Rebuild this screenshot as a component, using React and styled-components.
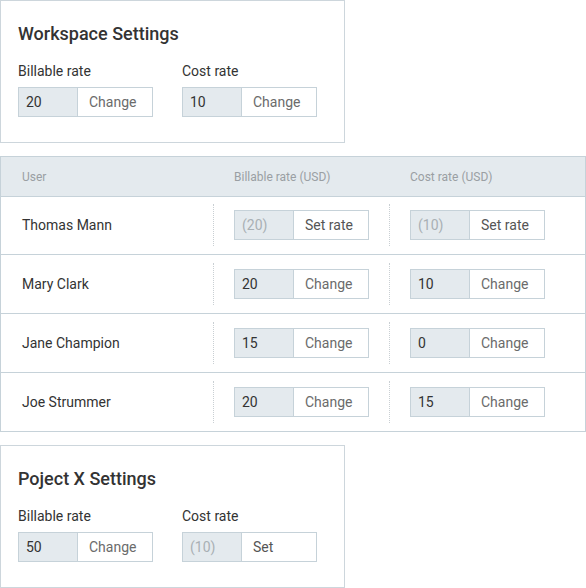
import React from "react";
import styled, { createGlobalStyle } from "styled-components";

const Global = createGlobalStyle`
  html, body { margin: 0; padding: 0; background: #ffffff; }
  body { font-family: Roboto, "Liberation Sans", Arial, sans-serif; color: #333; }
  * { box-sizing: border-box; }
`;

const Page = styled.div`
  display: flex;
  flex-direction: column;
  gap: 13px;
  width: 586px;
`;

const Card = styled.section`
  width: 345px;
  border: 1px solid #cdd6dc;
  padding: 21px 17px 25px;
  background: #fff;
`;

const CardTitle = styled.h2`
  margin: 0 0 15px;
  font-size: 18px;
  line-height: 24px;
  font-weight: 500;
  color: #333;
`;

const Fields = styled.div`
  display: flex;
  gap: 29px;
`;

const Field = styled.div`
  display: flex;
  flex-direction: column;
  gap: 6px;
`;

const Label = styled.label`
  font-size: 14px;
  line-height: 20px;
  color: #333;
`;

const Group = styled.div`
  display: flex;
  width: 135px;
  height: 30px;
  border: 1px solid #c6d2d9;
  background: #fff;
`;

const Value = styled.div`
  width: 59px;
  flex: none;
  display: flex;
  align-items: center;
  padding-left: 7px;
  background: #e4eaee;
  border-right: 1px solid #c6d2d9;
  font-size: 14px;
  color: ${(p) => (p.$inherited ? "#a9b0b4" : "#333")};
`;

const Action = styled.button`
  flex: 1;
  border: 0;
  background: #fff;
  padding: 0 0 0 11px;
  text-align: left;
  font-family: inherit;
  font-size: 14px;
  color: ${(p) => (p.$set ? "#555" : "#6b6b6b")};
  cursor: pointer;
`;

const Table = styled.div`
  border: 1px solid #c6d2d9;
`;

const HeadRow = styled.div`
  display: grid;
  grid-template-columns: 212px 176px 1fr;
  height: 40px;
  align-items: center;
  background: #e4eaee;
  border-bottom: 1px solid #c6d2d9;
`;

const HeadCell = styled.div`
  font-size: 12px;
  color: #9a9fa3;
  padding-left: 21px;
`;

const Row = styled.div`
  display: grid;
  grid-template-columns: 212px 176px 1fr;
  padding: 8px 0 8px;
  border-top: ${(p) => (p.$first ? "0" : "1px solid #c6d2d9")};
  height: ${(p) => (p.$first ? "57px" : "59px")};
  padding-top: ${(p) => (p.$first ? "7px" : "8px")};
`;

const NameCell = styled.div`
  display: flex;
  align-items: center;
  padding-left: 21px;
  font-size: 14px;
  color: #333;
`;

const RateCell = styled.div`
  display: flex;
  align-items: center;
  padding-left: 20px;
  border-left: 1px dotted #c9cfd3;
`;

const users = [
  { name: "Thomas Mann", bill: "20", cost: "10", inherited: true },
  { name: "Mary Clark", bill: "20", cost: "10" },
  { name: "Jane Champion", bill: "15", cost: "0" },
  { name: "Joe Strummer", bill: "20", cost: "15" },
];

function RateInput({ value, inherited, action }) {
  return (
    <Group>
      <Value $inherited={inherited}>{inherited ? `(${value})` : value}</Value>
      <Action $set={action !== "Change"}>{action}</Action>
    </Group>
  );
}

function SettingsCard({ title, bill, cost }) {
  return (
    <Card>
      <CardTitle>{title}</CardTitle>
      <Fields>
        <Field>
          <Label>Billable rate</Label>
          <RateInput {...bill} />
        </Field>
        <Field>
          <Label>Cost rate</Label>
          <RateInput {...cost} />
        </Field>
      </Fields>
    </Card>
  );
}

export default function App() {
  return (
    <>
      <Global />
      <Page>
        <SettingsCard
          title="Workspace Settings"
          bill={{ value: "20", action: "Change" }}
          cost={{ value: "10", action: "Change" }}
        />
        <Table>
          <HeadRow>
            <HeadCell>User</HeadCell>
            <HeadCell>Billable rate (USD)</HeadCell>
            <HeadCell>Cost rate (USD)</HeadCell>
          </HeadRow>
          {users.map((u, i) => (
            <Row key={u.name} $first={i === 0}>
              <NameCell>{u.name}</NameCell>
              <RateCell>
                <RateInput
                  value={u.bill}
                  inherited={u.inherited}
                  action={u.inherited ? "Set rate" : "Change"}
                />
              </RateCell>
              <RateCell>
                <RateInput
                  value={u.cost}
                  inherited={u.inherited}
                  action={u.inherited ? "Set rate" : "Change"}
                />
              </RateCell>
            </Row>
          ))}
        </Table>
        <SettingsCard
          title="Poject X Settings"
          bill={{ value: "50", action: "Change" }}
          cost={{ value: "10", inherited: true, action: "Set" }}
        />
      </Page>
    </>
  );
}
